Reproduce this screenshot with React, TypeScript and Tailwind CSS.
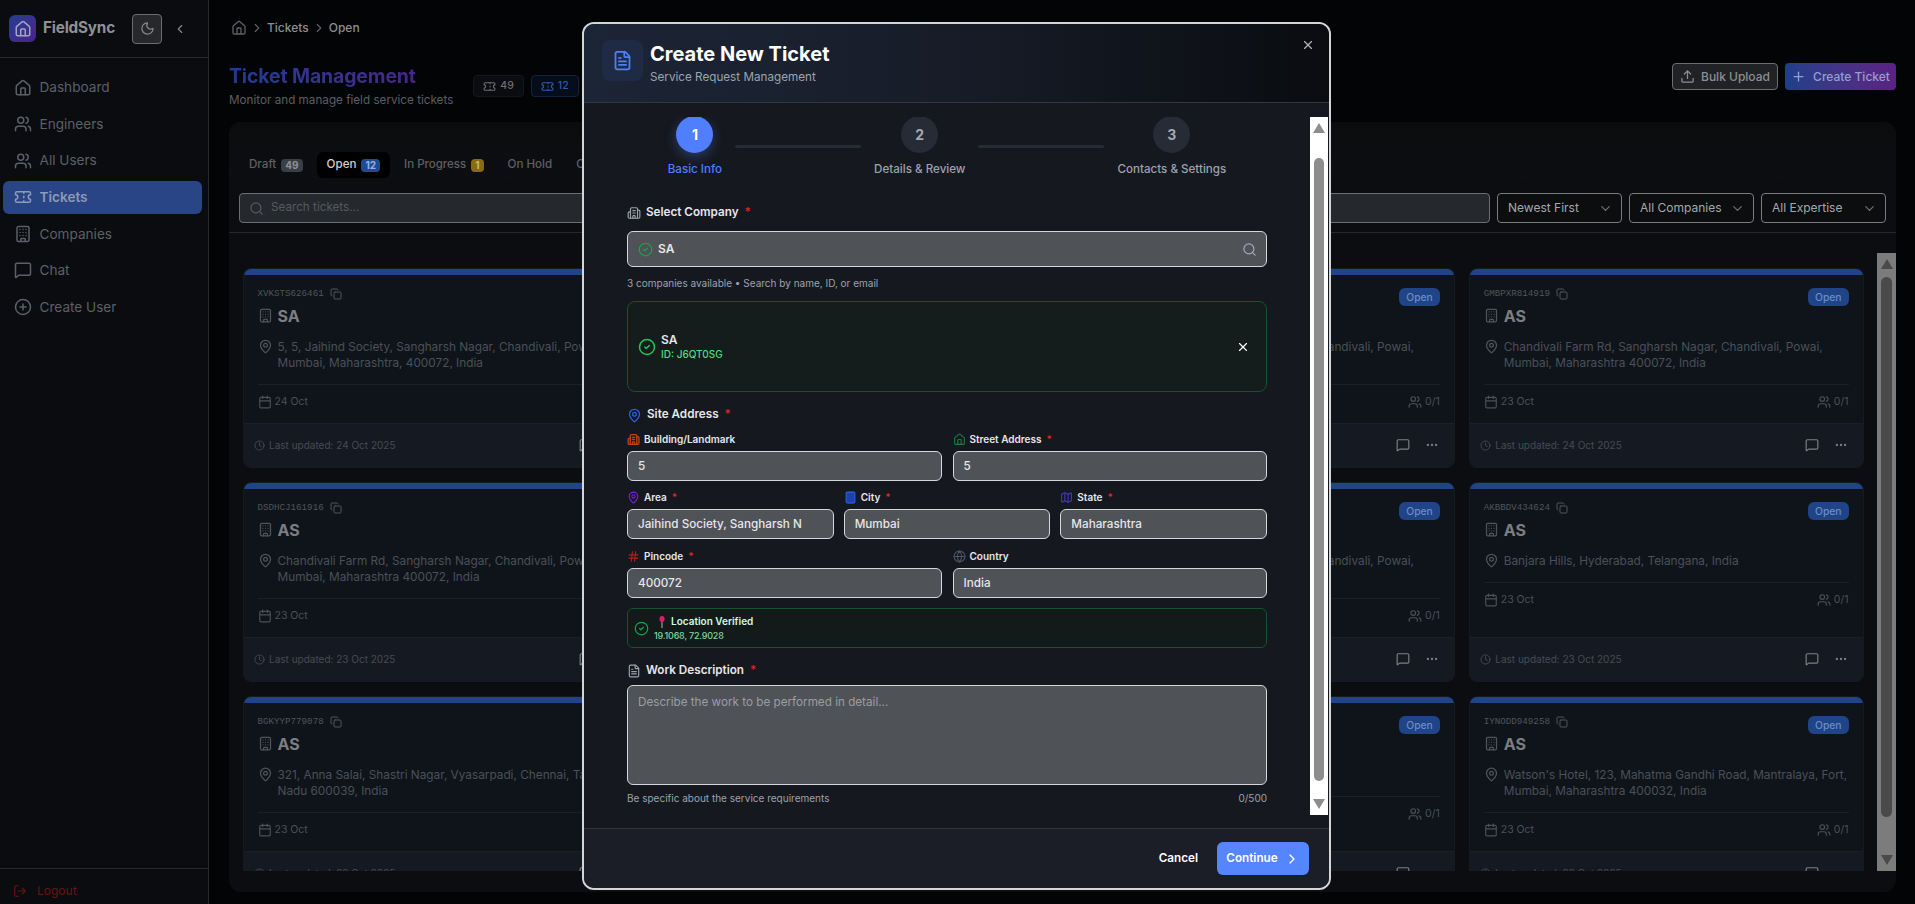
import {
  Building,
  Building2,
  Calendar,
  ChevronDown,
  ChevronLeft,
  ChevronRight,
  CircleCheck,
  CirclePlus,
  Clock,
  Copy,
  Ellipsis,
  FileText,
  Globe,
  Hash,
  House,
  LogOut,
  Map as MapIcon,
  MapPin,
  MessageSquare,
  Moon,
  Plus,
  Search,
  Ticket,
  Upload,
  Users,
  X,
} from "lucide-react";
import type { ReactNode } from "react";

const navItems = [
  { label: "Dashboard", icon: House },
  { label: "Engineers", icon: Users },
  { label: "All Users", icon: Users },
  { label: "Tickets", icon: Ticket, active: true },
  { label: "Companies", icon: Building },
  { label: "Chat", icon: MessageSquare },
  { label: "Create User", icon: CirclePlus },
];

const CHANDIVALI = "Chandivali Farm Rd, Sangharsh Nagar, Chandivali, Powai, Mumbai, Maharashtra 400072, India";

const tickets = [
  { id: "XVKSTS626461", name: "SA", address: "5, 5, Jaihind Society, Sangharsh Nagar, Chandivali, Powai, Mumbai, Maharashtra, 400072, India", date: "24 Oct", updated: "24 Oct 2025" },
  { id: "RTQWNE512207", name: "AS", address: CHANDIVALI, date: "24 Oct", updated: "24 Oct 2025" },
  { id: "LMPZKA730915", name: "AS", address: CHANDIVALI, date: "24 Oct", updated: "24 Oct 2025" },
  { id: "GMBPXR814919", name: "AS", address: CHANDIVALI, date: "23 Oct", updated: "24 Oct 2025" },
  { id: "DSDHCJ161916", name: "AS", address: CHANDIVALI, date: "23 Oct", updated: "23 Oct 2025" },
  { id: "HQTRVB402183", name: "AS", address: CHANDIVALI, date: "23 Oct", updated: "23 Oct 2025" },
  { id: "PWNCEY295560", name: "AS", address: CHANDIVALI, date: "23 Oct", updated: "23 Oct 2025" },
  { id: "AKBBDV434624", name: "AS", address: "Banjara Hills, Hyderabad, Telangana, India", date: "23 Oct", updated: "23 Oct 2025" },
  { id: "BGKYYP779078", name: "AS", address: "321, Anna Salai, Shastri Nagar, Vyasarpadi, Chennai, Tamil Nadu 600039, India", date: "23 Oct", updated: "23 Oct 2025" },
  { id: "ZUFOAH618342", name: "AS", address: "Hitech City, Hyderabad, India", date: "23 Oct", updated: "23 Oct 2025" },
  { id: "CEXJSM087451", name: "AS", address: "Hitech City, Hyderabad, India", date: "23 Oct", updated: "23 Oct 2025" },
  { id: "IYNODD949258", name: "AS", address: "Watson's Hotel, 123, Mahatma Gandhi Road, Mantralaya, Fort, Mumbai, Maharashtra 400032, India", date: "23 Oct", updated: "23 Oct 2025" },
];

function Sidebar() {
  return (
    <aside className="flex h-full w-[209px] shrink-0 flex-col border-r border-[#25282c] bg-[#0a0c0f]">
      <div className="flex h-[58px] shrink-0 items-center border-b border-[#25282c] pl-[9px]">
        <div className="flex h-[27px] w-[27px] items-center justify-center rounded-md bg-gradient-to-br from-[#1f3d8f] to-[#4c1f8c]">
          <House size={18} className="text-[#9aa6c4]" />
        </div>
        <span className="ml-[7px] w-[72px] text-[15.3px] font-bold tracking-[-0.2px] text-[#8e9195]">FieldSync</span>
        <button className="ml-[17px] flex h-[30px] w-[30px] items-center justify-center rounded border border-[#6a6d70] bg-[#26282b]">
          <Moon size={15} className="text-[#85888b]" />
        </button>
        <ChevronLeft size={14} className="ml-[11px] text-[#85888b]" />
      </div>
      <nav className="flex flex-col gap-[3.6px] px-[3px] pt-[13px]">
        {navItems.map((item) => (
          <div
            key={item.label}
            className={`flex h-[33px] w-[199px] items-center gap-[7.5px] rounded-md pl-[11px] text-[13.6px] ${
              item.active ? "bg-[#2a4585] font-semibold text-[#8d9ab8]" : "text-[#5c6066]"
            }`}
          >
            <item.icon size={18} className={item.active ? "text-[#8d9ab8]" : "text-[#5c6066]"} />
            {item.label}
          </div>
        ))}
      </nav>
      <div className="mt-auto flex h-[36px] items-start gap-[10px] border-t border-[#25282c] pl-[13px] pt-[13px] text-[12px] leading-[18px] text-[#6a1414]">
        <LogOut size={14} className="mt-[2px]" />
        Logout
      </div>
    </aside>
  );
}

function Chip({ count, className }: { count: string; className: string }) {
  return (
    <div className={`mt-[19px] flex h-[22px] items-center gap-[4px] rounded border px-[9px] text-[10.5px] font-medium ${className}`}>
      <Ticket size={13} />
      {count}
    </div>
  );
}

function TicketCard({ t }: { t: (typeof tickets)[number] }) {
  return (
    <div className="flex flex-col overflow-hidden rounded-lg border border-[#161b22] bg-[#0f141b]">
      <div className="h-[6px] shrink-0 bg-[#1f4488]" />
      <div className="flex-1 pl-[13.5px] pr-[14.5px] pt-[13px]">
        <div className="flex items-start justify-between">
          <div className="flex h-[12px] items-center gap-[6px] font-['Liberation_Mono',monospace] text-[9.2px] text-[#4e545c]">
            {t.id}
            <Copy size={12} className="text-[#4e545c]" />
          </div>
          <span className="rounded-md bg-[#1f4488] px-[7px] py-[2px] text-[10.3px] font-medium leading-[14px] text-[#6c8cc4]">Open</span>
        </div>
        <div className="mt-[-0.5px] flex h-[20px] items-center gap-[5px]">
          <Building size={15} className="text-[#4e545c]" />
          <span className="text-[16px] font-bold text-[#7c7e82]">{t.name}</span>
        </div>
        <div className="mt-[13px] flex gap-[5px] border-b border-[#1a2028] pb-[13px]">
          <MapPin size={15} className="shrink-0 text-[#4e545c]" />
          <p className="text-[11.8px] leading-[16px] text-[#4a5058]">{t.address}</p>
        </div>
        <div className="mt-[10px] flex h-[14px] items-center justify-between text-[10.5px] text-[#4a5058]">
          <span className="flex items-center gap-[3px]">
            <Calendar size={14} />
            {t.date}
          </span>
          <span className="flex items-center gap-[3px]">
            <Users size={14} />
            0/1
          </span>
        </div>
      </div>
      <div className="flex h-[44px] shrink-0 items-center justify-between border-t border-[#1a2028] bg-[#151a22] pl-[10px] pr-[15px]">
        <span className="flex items-center gap-[4px] text-[10px] text-[#454b53]">
          <Clock size={11} />
          Last updated: {t.updated}
        </span>
        <span className="flex items-center gap-[15px] text-[#7c8086]">
          <MessageSquare size={14} />
          <Ellipsis size={14} />
        </span>
      </div>
    </div>
  );
}

function FakeScrollbar({ className, thumb, arrow, thumbPos }: { className: string; thumb: string; arrow: string; thumbPos: string }) {
  return (
    <div className={`relative shrink-0 ${className}`}>
      <svg viewBox="0 0 12 10" className={`absolute left-1/2 top-[6px] h-[10px] w-[12px] -translate-x-1/2 ${arrow}`}>
        <path d="M6 0 12 10H0Z" fill="currentColor" />
      </svg>
      <div className={`absolute inset-x-[4px] rounded-full ${thumb} ${thumbPos}`} />
      <svg viewBox="0 0 12 10" className={`absolute bottom-[6px] left-1/2 h-[10px] w-[12px] -translate-x-1/2 ${arrow}`}>
        <path d="M0 0H12L6 10Z" fill="currentColor" />
      </svg>
    </div>
  );
}

function MainPage() {
  return (
    <main className="flex min-w-0 flex-1 flex-col bg-[#030406] pl-[20px] pr-[19px]">
      <div className="flex h-[56px] shrink-0 items-center text-[12px] font-medium text-[#8c8f92]">
        <House size={16} className="ml-[2px] text-[#5c6066]" />
        <ChevronRight size={14} className="mx-[3px] text-[#5c6066]" />
        <span>Tickets</span>
        <ChevronRight size={14} className="mx-[3px] text-[#5c6066]" />
        <span>Open</span>
      </div>
      <div className="flex h-[66px] shrink-0 items-start">
        <div className="pt-[6px]">
          <h1 className="bg-gradient-to-r from-[#1d3c8f] to-[#4b1f8a] bg-clip-text text-[19.4px] font-bold leading-[28px] tracking-[-0.1px] text-transparent">
            Ticket Management
          </h1>
          <p className="mt-[2px] text-[11.7px] leading-[16px] text-[#5a5e63]">Monitor and manage field service tickets</p>
        </div>
        <div className="ml-[20px] flex gap-[7px]">
          <Chip count="49" className="border-[#14171b] bg-[#0a0c0f] text-[#6a6e73]" />
          <Chip count="12" className="border-[#12233f] bg-[#060d1a] text-[#2f5ca8]" />
          <Chip count="1" className="border-[#3a2a0c] bg-[#151005] text-[#8a6a10]" />
        </div>
        <div className="ml-auto mt-[7px] flex gap-[7px]">
          <button className="flex h-[27px] w-[106px] items-center justify-center gap-[6px] rounded border border-[#6b6d70] bg-[#202225] text-[12px] font-medium text-[#8c8f92]">
            <Upload size={15} />
            Bulk Upload
          </button>
          <button className="flex h-[27px] w-[111px] items-center justify-center gap-[7px] rounded bg-gradient-to-r from-[#1e3f8a] to-[#5b2184] text-[12px] font-medium text-[#8ea3c9]">
            <Plus size={15} />
            Create Ticket
          </button>
        </div>
      </div>
      <section className="flex h-[770px] shrink-0 flex-col overflow-hidden rounded-xl bg-[#0b0d10]">
        <div className="flex h-[56px] shrink-0 items-end gap-[4px] bg-gradient-to-b from-[#0a0c0e] to-[#0c0e11] pl-[10px]">
          <div className="flex h-[26px] items-center gap-[5px] px-[10px] text-[11.6px] font-medium text-[#5c6066]">
            Draft
            <span className="rounded-[4px] bg-[#3a3f47] px-[4px] text-[10px] font-bold leading-[13px] text-[#8d9299]">49</span>
          </div>
          <div className="flex h-[26px] items-center gap-[5px] rounded-md bg-black px-[10px] text-[11.6px] font-medium text-[#cfd1d3]">
            Open
            <span className="rounded-[4px] bg-[#1f4a94] px-[4px] text-[10px] font-bold leading-[13px] text-[#93b4e8]">12</span>
          </div>
          <div className="flex h-[26px] items-center gap-[5px] px-[10px] text-[11.5px] font-medium text-[#5c6066]">
            In Progress
            <span className="rounded-[4px] bg-[#8a6a10] px-[4px] text-[10px] font-bold leading-[13px] text-[#c9b676]">1</span>
          </div>
          <div className="flex h-[26px] items-center px-[10px] text-[11.6px] font-medium text-[#5c6066]">On Hold</div>
          <div className="flex h-[26px] items-center px-[10px] text-[11.6px] font-medium text-[#5c6066]">Completed</div>
        </div>
        <div className="flex h-[55px] shrink-0 items-start gap-[7px] border-b border-[#25282c] px-[10px] pt-[15px]">
          <div className="flex h-[30px] min-w-0 flex-1 items-center gap-[7px] rounded border border-[#6b6f73] bg-[#25292d] pl-[9px] text-[11.7px] text-[#55595e]">
            <Search size={15} />
            Search tickets...
          </div>
          {["Newest First", "All Companies", "All Expertise"].map((label) => (
            <div
              key={label}
              className="flex h-[30px] w-[125px] items-center justify-between rounded border border-[#7a7d80] bg-[#0b0d0f] pl-[10px] pr-[8px] text-[12px] text-[#a5a8ab]"
            >
              {label}
              <ChevronDown size={15} className="text-[#6b6f73]" />
            </div>
          ))}
        </div>
        <div className="mt-[20px] flex h-[618px] shrink-0 overflow-hidden">
          <div className="min-w-0 flex-1 overflow-hidden pl-[14px] pr-[13px] pt-[15px]">
            <div className="grid auto-rows-[199.5px] grid-cols-4 gap-x-[14px] gap-y-[14.5px]">
              {tickets.map((t) => (
                <TicketCard key={t.id} t={t} />
              ))}
            </div>
          </div>
          <FakeScrollbar className="w-[19px] bg-[#7c7c7c]" thumb="bg-[#4a4a4a]" arrow="text-[#4a4a4a]" thumbPos="top-[24px] bottom-[54px]" />
        </div>
      </section>
    </main>
  );
}

function FieldLabel({ icon, children, required }: { icon: ReactNode; children: ReactNode; required?: boolean }) {
  return (
    <div className="flex h-[14px] items-center gap-[4px] text-[10px] font-semibold text-[#e5e7eb]">
      {icon}
      {children}
      {required && <span className="ml-[1px] text-[#dc2626]">*</span>}
    </div>
  );
}

function SectionLabel({ icon, children }: { icon: ReactNode; children: ReactNode }) {
  return (
    <div className="flex h-[16px] items-center gap-[5px] text-[11.7px] font-semibold text-[#e5e7eb]">
      {icon}
      {children}
      <span className="ml-[1px] text-[#dc2626]">*</span>
    </div>
  );
}

function TextField({ value }: { value: string }) {
  return (
    <input
      readOnly
      value={value}
      className="mt-[5px] h-[30px] w-full rounded-md border border-[#d5d7da] bg-[#4f5257] px-[10px] text-[11.7px] font-medium text-[#e5e7eb] outline-none"
    />
  );
}

function Step({ n, label, active }: { n: number; label: string; active?: boolean }) {
  return (
    <div className="flex flex-col items-center">
      <div
        className={`flex h-[37px] w-[37px] items-center justify-center rounded-full text-[14px] font-bold ${
          active ? "bg-[#4f7fff] text-white shadow-[0_4px_12px_rgba(79,127,255,0.35)]" : "bg-[#272b36] text-[#a3a7ae]"
        }`}
      >
        {n}
      </div>
      <span className={`mt-[8.5px] text-[11.6px] font-medium leading-[16px] ${active ? "text-[#4f7fff]" : "text-[#9ca3af]"}`}>{label}</span>
    </div>
  );
}

function CreateTicketModal() {
  return (
    <div className="absolute inset-0 pl-[582px] pt-[22px]">
      <div className="relative flex h-[868px] w-[749px] flex-col overflow-hidden rounded-xl border-2 border-[#d4d5d7] bg-[#16181f]">
        <header className="flex h-[79px] shrink-0 items-start border-b border-[#33363c] bg-gradient-to-r from-[#1c2536] via-[#171c28] to-[#0a0c10] pl-[18px] pt-[16px]">
          <div className="flex h-[41px] w-[41px] items-center justify-center rounded-lg bg-[#1f2b44]">
            <FileText size={21} className="text-[#4f7fff]" />
          </div>
          <div className="ml-[7px]">
            <h2 className="text-[20px] font-bold leading-[28px] text-white">Create New Ticket</h2>
            <p className="mt-[1px] text-[11.7px] leading-[16px] text-[#9ca3af]">Service Request Management</p>
          </div>
          <X size={14} className="absolute right-[14px] top-[14px] text-[#b0b3b8]" />
        </header>

        <div className="flex min-h-0 flex-1 pb-[13px] pt-[14px]">
          <div className="min-w-0 flex-1 overflow-hidden pl-[43px] pr-[43px]">
            <div className="mt-[-1.5px] flex justify-center gap-[13px]">
              <Step n={1} label="Basic Info" active />
              <div className="mt-[29px] h-[3px] w-[126px] rounded-full bg-[#272b36]" />
              <Step n={2} label="Details & Review" />
              <div className="mt-[29px] h-[3px] w-[126px] rounded-full bg-[#272b36]" />
              <Step n={3} label="Contacts & Settings" />
            </div>

            <div className="mt-[28px]">
              <SectionLabel icon={<Building2 size={14} className="text-[#9ca3af]" />}>Select Company</SectionLabel>
            </div>
            <div className="mt-[10px] flex h-[36px] items-center rounded-md border border-[#d5d7da] bg-[#4f5257] pl-[10px] pr-[9px]">
              <CircleCheck size={15} className="text-[#16a34a]" />
              <span className="ml-[5px] text-[12px] font-semibold text-[#e5e7eb]">SA</span>
              <Search size={15} className="ml-auto text-[#a3a7ae]" />
            </div>
            <p className="mt-[9px] text-[10px] leading-[14px] text-[#9ca3af]">3 companies available • Search by name, ID, or email</p>

            <div className="mt-[11px] flex h-[91px] items-center rounded-lg border border-[#14532d] bg-[#141c1c] pl-[10px] pr-[16px]">
              <CircleCheck size={18} className="text-[#22c55e]" />
              <div className="ml-[5px]">
                <div className="text-[12px] font-semibold leading-[14px] text-[#e5e7eb]">SA</div>
                <div className="text-[10px] font-medium leading-[14px] text-[#4ade80]">ID: J6QT0SG</div>
              </div>
              <X size={14} className="ml-auto text-white" />
            </div>

            <div className="mt-[15px]">
              <SectionLabel icon={<MapPin size={15} className="text-[#2563eb]" />}>Site Address</SectionLabel>
            </div>

            <div className="mt-[9px] grid grid-cols-2 gap-x-[11px]">
              <div>
                <FieldLabel icon={<Building2 size={13} strokeWidth={2.5} className="text-[#c2410c]" />}>Building/Landmark</FieldLabel>
                <TextField value="5" />
              </div>
              <div>
                <FieldLabel icon={<House size={13} className="text-[#15803d]" />} required>
                  Street Address
                </FieldLabel>
                <TextField value="5" />
              </div>
            </div>

            <div className="mt-[9px] grid grid-cols-3 gap-x-[10px]">
              <div>
                <FieldLabel icon={<MapPin size={13} className="text-[#7e22ce]" />} required>
                  Area
                </FieldLabel>
                <TextField value="Jaihind Society, Sangharsh N" />
              </div>
              <div>
                <FieldLabel icon={<Building size={13} className="fill-[#1e40af] text-[#2563eb]" />} required>
                  City
                </FieldLabel>
                <TextField value="Mumbai" />
              </div>
              <div>
                <FieldLabel icon={<MapIcon size={13} className="text-[#4338ca]" />} required>
                  State
                </FieldLabel>
                <TextField value="Maharashtra" />
              </div>
            </div>

            <div className="mt-[10px] grid grid-cols-2 gap-x-[11px]">
              <div>
                <FieldLabel icon={<Hash size={13} className="text-[#b91c1c]" />} required>
                  Pincode
                </FieldLabel>
                <TextField value="400072" />
              </div>
              <div>
                <FieldLabel icon={<Globe size={13} className="text-[#4b5563]" />}>Country</FieldLabel>
                <TextField value="India" />
              </div>
            </div>

            <div className="mt-[10px] flex h-[40px] items-center rounded-md border border-[#14532d] bg-[#121a1a] pl-[6px]">
              <CircleCheck size={15} className="text-[#16a34a]" />
              <div className="ml-[5px]">
                <div className="flex h-[14px] items-center gap-[6px] pl-[5px] text-[10px] font-semibold text-[#d1fae5]">
                  <svg viewBox="0 0 7 14" className="h-[12px] w-[6px]">
                    <rect x="3" y="6" width="1" height="8" fill="#c9ccd1" />
                    <ellipse cx="3.5" cy="3.5" rx="3" ry="3.5" fill="#e11d63" />
                  </svg>
                  Location Verified
                </div>
                <div className="mt-[1px] text-[9px] font-medium leading-[12px] tracking-[-0.2px] text-[#7fd6a0]">19.1068, 72.9028</div>
              </div>
            </div>

            <div className="mt-[15px]">
              <SectionLabel icon={<FileText size={14} className="text-[#9ca3af]" />}>Work Description</SectionLabel>
            </div>
            <textarea
              readOnly
              placeholder="Describe the work to be performed in detail..."
              className="mt-[6px] block h-[100px] w-full resize-none rounded-md border border-[#d5d7da] bg-[#4f5257] px-[10px] py-[8px] text-[11.7px] leading-[16px] outline-none placeholder:text-[#9a9ea4]"
            />
            <div className="mt-[6px] flex justify-between text-[10px] leading-[14px] text-[#9ca3af]">
              <span>Be specific about the service requirements</span>
              <span>0/500</span>
            </div>
          </div>
          <FakeScrollbar className="mr-[1px] w-[18px] bg-white" thumb="bg-[#8d8d8d]" arrow="text-[#8d8d8d]" thumbPos="top-[41px] bottom-[34px]" />
        </div>

        <footer className="flex h-[60px] shrink-0 items-center justify-end border-t border-[#33363c] bg-[#1b1e26] pr-[20px]">
          <button className="text-[11.7px] font-semibold text-white">Cancel</button>
          <button className="ml-[19px] flex h-[33px] w-[92px] items-center justify-center gap-[6px] rounded-md bg-[#5585ff] text-[11.7px] font-semibold text-white">
            Continue
            <ChevronRight size={16} />
          </button>
        </footer>
      </div>
    </div>
  );
}

export default function App() {
  return (
    <div className="relative flex h-[904px] w-[1915px] overflow-hidden bg-[#030406] font-['Inter',sans-serif]">
      <Sidebar />
      <MainPage />
      <CreateTicketModal />
    </div>
  );
}
